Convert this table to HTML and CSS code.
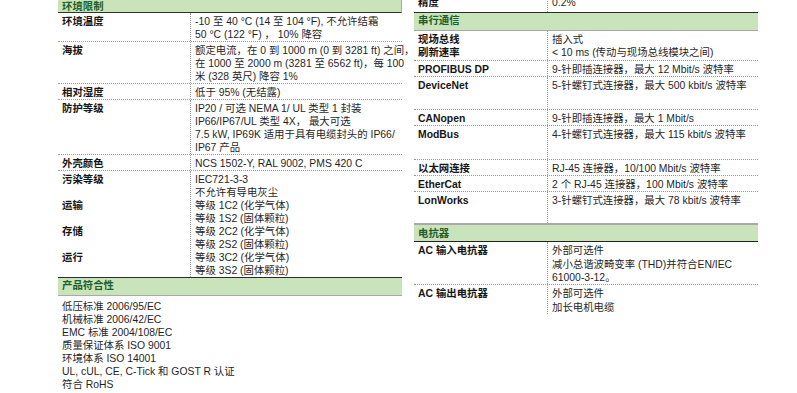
FILE: index.html
```html
<!DOCTYPE html>
<html lang="zh-CN">
<head>
  <meta charset="UTF-8">
  <meta name="viewport" content="width=device-width, initial-scale=1.0">
  <title>技术数据</title>
  <link rel="stylesheet" href="styles.css">
</head>
<body>
  <div class="page">
    <!-- left column -->
    <div class="col col-left">
      <div class="sec-head top-cut">环境限制</div>
      <div class="row">
        <div class="k">环境温度</div>
        <div class="v">-10 至 40 °C (14 至 104 °F), 不允许结霜<br>50 °C (122 °F) ，&nbsp;10% 降容</div>
      </div>
      <div class="row">
        <div class="k">海拔</div>
        <div class="v">额定电流，在 0 到 1000 m (0 到 3281 ft) 之间，<br>在 1000 至 2000 m (3281 至 6562 ft)，每 100<br>米 (328 英尺) 降容 1%</div>
      </div>
      <div class="row">
        <div class="k">相对湿度</div>
        <div class="v">低于 95% (无结露)</div>
      </div>
      <div class="row">
        <div class="k">防护等级</div>
        <div class="v">IP20 / 可选 NEMA 1/ UL 类型 1 封装<br>IP66/IP67/UL 类型 4X， 最大可选<br>7.5 kW, IP69K 适用于具有电缆封头的 IP66/<br>IP67 产品</div>
      </div>
      <div class="row">
        <div class="k">外壳颜色</div>
        <div class="v">NCS 1502-Y, RAL 9002, PMS 420 C</div>
      </div>
      <div class="row">
        <div class="k">污染等级<br><br>运输<br><br>存储<br><br>运行</div>
        <div class="v">IEC721-3-3<br>不允许有导电灰尘<br>等级 1C2 (化学气体)<br>等级 1S2 (固体颗粒)<br>等级 2C2 (化学气体)<br>等级 2S2 (固体颗粒)<br>等级 3C2 (化学气体)<br>等级 3S2 (固体颗粒)</div>
      </div>

      <div class="sec-head">产品符合性</div>
      <ul class="plain-list">
        <li>低压标准 2006/95/EC</li>
        <li>机械标准 2006/42/EC</li>
        <li>EMC 标准 2004/108/EC</li>
        <li>质量保证体系 ISO 9001</li>
        <li>环境体系 ISO 14001</li>
        <li>UL, cUL, CE, C-Tick 和 GOST R 认证</li>
        <li>符合 RoHS</li>
      </ul>
    </div>

    <!-- right column -->
    <div class="col col-right">
      <div class="row first-cut">
        <div class="k">精度</div>
        <div class="v">0.2%</div>
      </div>

      <div class="sec-head">串行通信</div>
      <div class="row">
        <div class="k">现场总线<br>刷新速率</div>
        <div class="v">插入式<br>&lt; 10 ms (传动与现场总线模块之间)</div>
      </div>
      <div class="row">
        <div class="k">PROFIBUS DP</div>
        <div class="v">9-针即插连接器，最大 12 Mbit/s 波特率</div>
      </div>
      <div class="row tall">
        <div class="k">DeviceNet</div>
        <div class="v">5-针螺钉式连接器，最大 500 kbit/s 波特率</div>
      </div>
      <div class="row">
        <div class="k">CANopen</div>
        <div class="v">9-针即插连接器，最大 1 Mbit/s</div>
      </div>
      <div class="row tall">
        <div class="k">ModBus</div>
        <div class="v">4-针螺钉式连接器，最大 115 kbit/s 波特率</div>
      </div>
      <div class="row">
        <div class="k">以太网连接</div>
        <div class="v">RJ-45 连接器，10/100 Mbit/s 波特率</div>
      </div>
      <div class="row">
        <div class="k">EtherCat</div>
        <div class="v">2 个 RJ-45 连接器，100 Mbit/s 波特率</div>
      </div>
      <div class="row last">
        <div class="k">LonWorks</div>
        <div class="v">3-针螺钉式连接器，最大 78 kbit/s 波特率</div>
      </div>

      <div class="sec-head reactor">电抗器</div>
      <div class="row">
        <div class="k">AC 输入电抗器</div>
        <div class="v">外部可选件<br>减小总谐波畸变率 (THD)并符合EN/IEC<br>61000-3-12。</div>
      </div>
      <div class="row">
        <div class="k">AC 输出电抗器</div>
        <div class="v">外部可选件<br>加长电机电缆</div>
      </div>
    </div>
  </div>
</body>
</html>
```

FILE: styles.css
```css
body {
  margin: 0;
  background: #fff;
  font-family: "Liberation Sans", "Noto Sans CJK SC", sans-serif;
  font-size: 10.4px;
  color: #1f1f29;
  overflow: hidden;
}
.page {
  display: flex;
  gap: 12px;
  padding-left: 58px;
  height: 393px;
  overflow: hidden;
}
.col-left {
  width: 344px;
  line-height: 13px;
}
.col-right {
  width: 344px;
  margin-top: -7.3px;
  line-height: 13.3px;
}

/* section headings */
.sec-head {
  background: #c9e3bb;
  color: #1f5f2b;
  font-weight: bold;
  line-height: 13px;
  padding: 1px 4px 3px;
  border-top: 1px solid #2b2b2b;
  border-bottom: 1px solid #a9a9a9;
}
.sec-head.top-cut {
  border-top: none;
  border-right: 1px solid #a9a9a9;
  height: 13px;
  line-height: 10px;
  padding: 2px 4px 0;
  box-sizing: border-box;
  border-bottom: 1px solid #333;
}
.sec-head.reactor {
  border-top: 2px solid #a9a9a9;
  border-bottom: 1px solid #222;
  padding: 2.5px 4px 1px;
}

/* key / value rows */
.row {
  display: grid;
  grid-template-columns: 132px 1fr;
  border-top: 1px dotted #9a9a9a;
  white-space: nowrap;
}
.col-right .row {
  grid-template-columns: 133px 1fr;
}
.sec-head + .row {
  border-top: none;
}
.row .k {
  padding: 2px 4px 0;
  font-weight: bold;
  color: #161616;
}
.row .v {
  padding: 2px 4px 0;
  border-left: 1px dotted #9a9a9a;
}
.row.tall .k,
.row.tall .v {
  padding-bottom: 17px;
}
.row.last .k,
.row.last .v {
  padding-bottom: 15.3px;
}
.row.first-cut .k,
.row.first-cut .v {
  padding-bottom: 3px;
}

.plain-list {
  list-style: none;
  margin: 0;
  padding: 3.5px 4px 0;
  line-height: 13.1px;
  white-space: nowrap;
}
```
